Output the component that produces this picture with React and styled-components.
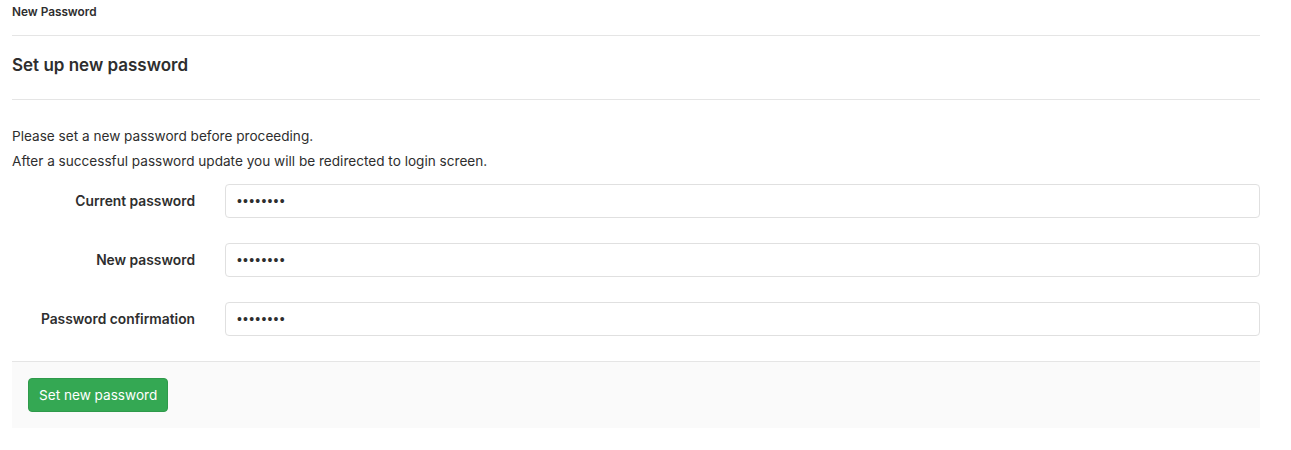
import React from 'react';
import styled, { createGlobalStyle } from 'styled-components';

const GlobalStyle = createGlobalStyle`
  body {
    margin: 0;
    background: #fff;
    font-family: Inter, "Liberation Sans", Arial, sans-serif;
    color: #2e2e2e;
  }
`;

const Page = styled.div`
  width: 1248px;
  padding: 0 12px;
`;

const Breadcrumb = styled.div`
  height: 36px;
  padding-top: 4px;
  font-size: 11.8px;
  line-height: 16px;
  font-weight: 600;
  color: #2e2e2e;
  border-bottom: 1px solid #e5e5e5;
  box-sizing: border-box;
`;

const Title = styled.h3`
  margin: 0;
  height: 64px;
  padding-bottom: 6px;
  display: flex;
  align-items: center;
  font-size: 17px;
  font-weight: 600;
  color: #2e2e2e;
  border-bottom: 1px solid #e5e5e5;
  box-sizing: border-box;
`;

const Intro = styled.div`
  padding-top: 24px;
  font-size: 13.6px;
  line-height: 25px;
  color: #2e2e2e;
`;

const Fields = styled.div`
  display: flex;
  flex-direction: column;
  gap: 25px;
  margin-top: 10px;
`;

const Row = styled.div`
  display: grid;
  grid-template-columns: 183px 1fr;
  column-gap: 30px;
  align-items: center;
`;

const Label = styled.label`
  text-align: right;
  font-size: 13.8px;
  font-weight: 600;
  color: #2e2e2e;
`;

const Input = styled.input`
  height: 34px;
  box-sizing: border-box;
  border: 1px solid #e0e0e0;
  border-radius: 4px;
  padding: 0 11px;
  font-family: "Liberation Sans", Arial, sans-serif;
  font-size: 14px;
  letter-spacing: 1.2px;
  color: #2e2e2e;
  outline: none;
`;

const Footer = styled.div`
  margin-top: 25px;
  border-top: 1px solid #e5e5e5;
  background: #fafafa;
  padding: 16px;
  height: 67px;
  box-sizing: border-box;
`;

const Button = styled.button`
  height: 34px;
  padding: 0 10px;
  background: #34a853;
  border: 1px solid #2f9a4b;
  border-radius: 4px;
  color: #fff;
  font-family: Inter, "Liberation Sans", Arial, sans-serif;
  font-size: 13.6px;
  cursor: pointer;
`;

const fields = ['Current password', 'New password', 'Password confirmation'];

const App = () => {
  return (
    <Page>
      <GlobalStyle />
      <Breadcrumb>New Password</Breadcrumb>
      <Title>Set up new password</Title>
      <Intro>
        <div>Please set a new password before proceeding.</div>
        <div>After a successful password update you will be redirected to login screen.</div>
      </Intro>
      <Fields>
        {fields.map((f) => (
          <Row key={f}>
            <Label>{f}</Label>
            <Input type="password" defaultValue="password" readOnly />
          </Row>
        ))}
      </Fields>
      <Footer>
        <Button>Set new password</Button>
      </Footer>
    </Page>
  );
};

export default App;
